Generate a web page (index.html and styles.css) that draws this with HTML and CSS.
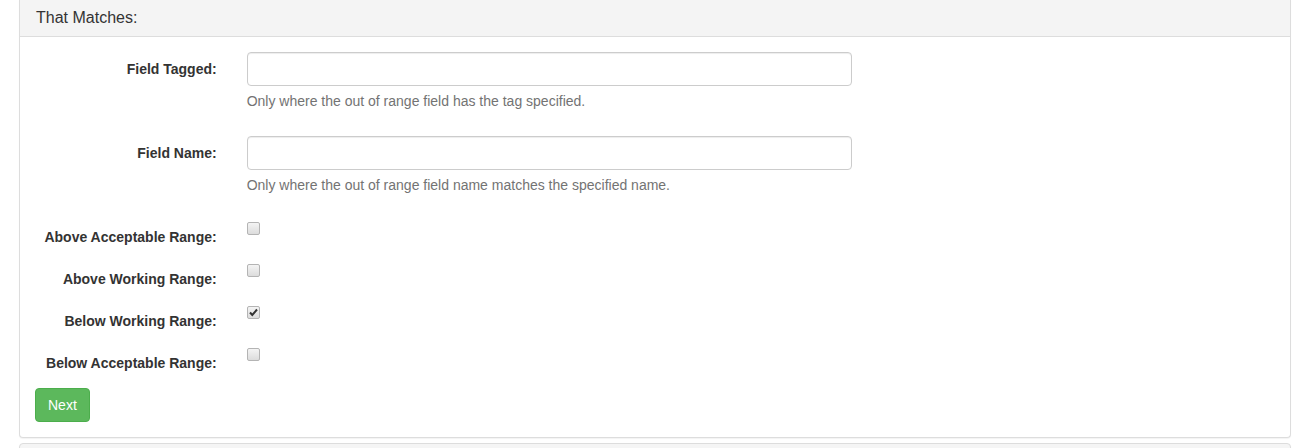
FILE: index.html
```html
<!DOCTYPE html>
<html>
<head>
<meta charset="utf-8">
<link rel="stylesheet" href="styles.css">
</head>
<body>
<div class="page">
  <div class="panel">
    <div class="panel-heading">That Matches:</div>
    <div class="panel-body">
      <form class="form">
        <div class="form-group">
          <label class="control-label">Field Tagged:</label>
          <div class="col-field">
            <input type="text" class="form-control">
            <span class="help-block">Only where the out of range field has the tag specified.</span>
          </div>
        </div>
        <div class="form-group">
          <label class="control-label">Field Name:</label>
          <div class="col-field">
            <input type="text" class="form-control">
            <span class="help-block">Only where the out of range field name matches the specified name.</span>
          </div>
        </div>
        <div class="form-group">
          <label class="control-label">Above Acceptable Range:</label>
          <div class="col-field"><input type="checkbox" class="check"></div>
        </div>
        <div class="form-group">
          <label class="control-label">Above Working Range:</label>
          <div class="col-field"><input type="checkbox" class="check"></div>
        </div>
        <div class="form-group">
          <label class="control-label">Below Working Range:</label>
          <div class="col-field"><input type="checkbox" class="check" checked></div>
        </div>
        <div class="form-group">
          <label class="control-label">Below Acceptable Range:</label>
          <div class="col-field"><input type="checkbox" class="check"></div>
        </div>
        <button type="button" class="btn-success">Next</button>
      </form>
    </div>
  </div>
  <div class="panel panel-next"></div>
</div>
</body>
</html>
```
FILE: styles.css
```css
* { box-sizing: border-box; }
html, body { margin: 0; padding: 0; background: #fff; }
body {
  font-family: "Liberation Sans", Arial, sans-serif;
  font-size: 14px;
  line-height: 20px;
  color: #333;
  overflow: hidden;
}
.page {
  margin: 0 10px 0 19px;
}
.panel {
  background: #fff;
  border: 1px solid #ddd;
  border-top: none;
  border-radius: 0 0 4px 4px;
  box-shadow: 0 1px 1px rgba(0,0,0,0.05);
}
.panel-heading {
  height: 37px;
  line-height: 36px;
  padding: 0 16px;
  font-size: 16px;
  color: #333;
  background: #f4f4f4;
  border-bottom: 1px solid #ddd;
}
.panel-body {
  padding: 15px;
}
.form-group {
  display: flex;
  margin: 0 -15px 15px;
}
.control-label {
  flex: 0 0 16.6667%;
  padding: 7px 15px 0;
  text-align: right;
  font-weight: bold;
  line-height: 20px;
}
.col-field {
  flex: 0 0 50%;
  padding: 0 15px;
}
.form-control {
  display: block;
  width: 100%;
  height: 34px;
  padding: 6px 12px;
  font: inherit;
  color: #555;
  background: #fff;
  border: 1px solid #ccc;
  border-radius: 4px;
  box-shadow: inset 0 1px 1px rgba(0,0,0,0.075);
  outline: none;
}
.help-block {
  display: block;
  margin-top: 5px;
  margin-bottom: 10px;
  color: #737373;
}
.check {
  -webkit-appearance: none;
  appearance: none;
  display: block;
  width: 13px;
  height: 13px;
  margin: 2px 0 12px;
  border: 1px solid #b4b4b4;
  border-radius: 2px;
  background: linear-gradient(#f4f4f4, #dcdcdc);
}
.check:checked {
  background-image: url("data:image/svg+xml;utf8,<svg xmlns='http://www.w3.org/2000/svg' width='11' height='11' viewBox='0 0 11 11'><path d='M2 5.5 L4.3 8 L9 2.5' fill='none' stroke='%23333' stroke-width='2'/></svg>"), linear-gradient(#f4f4f4, #dcdcdc);
  background-repeat: no-repeat;
  background-position: center;
}
.btn-success {
  display: inline-block;
  height: 34px;
  padding: 6px 12px;
  font: inherit;
  line-height: 20px;
  color: #fff;
  background: #5cb85c;
  border: 1px solid #4cae4c;
  border-radius: 4px;
  cursor: pointer;
}
.panel-next {
  margin-top: 5px;
  height: 40px;
  border-top: 1px solid #ddd;
  border-radius: 4px 4px 0 0;
  background: #f5f5f5;
}
```
